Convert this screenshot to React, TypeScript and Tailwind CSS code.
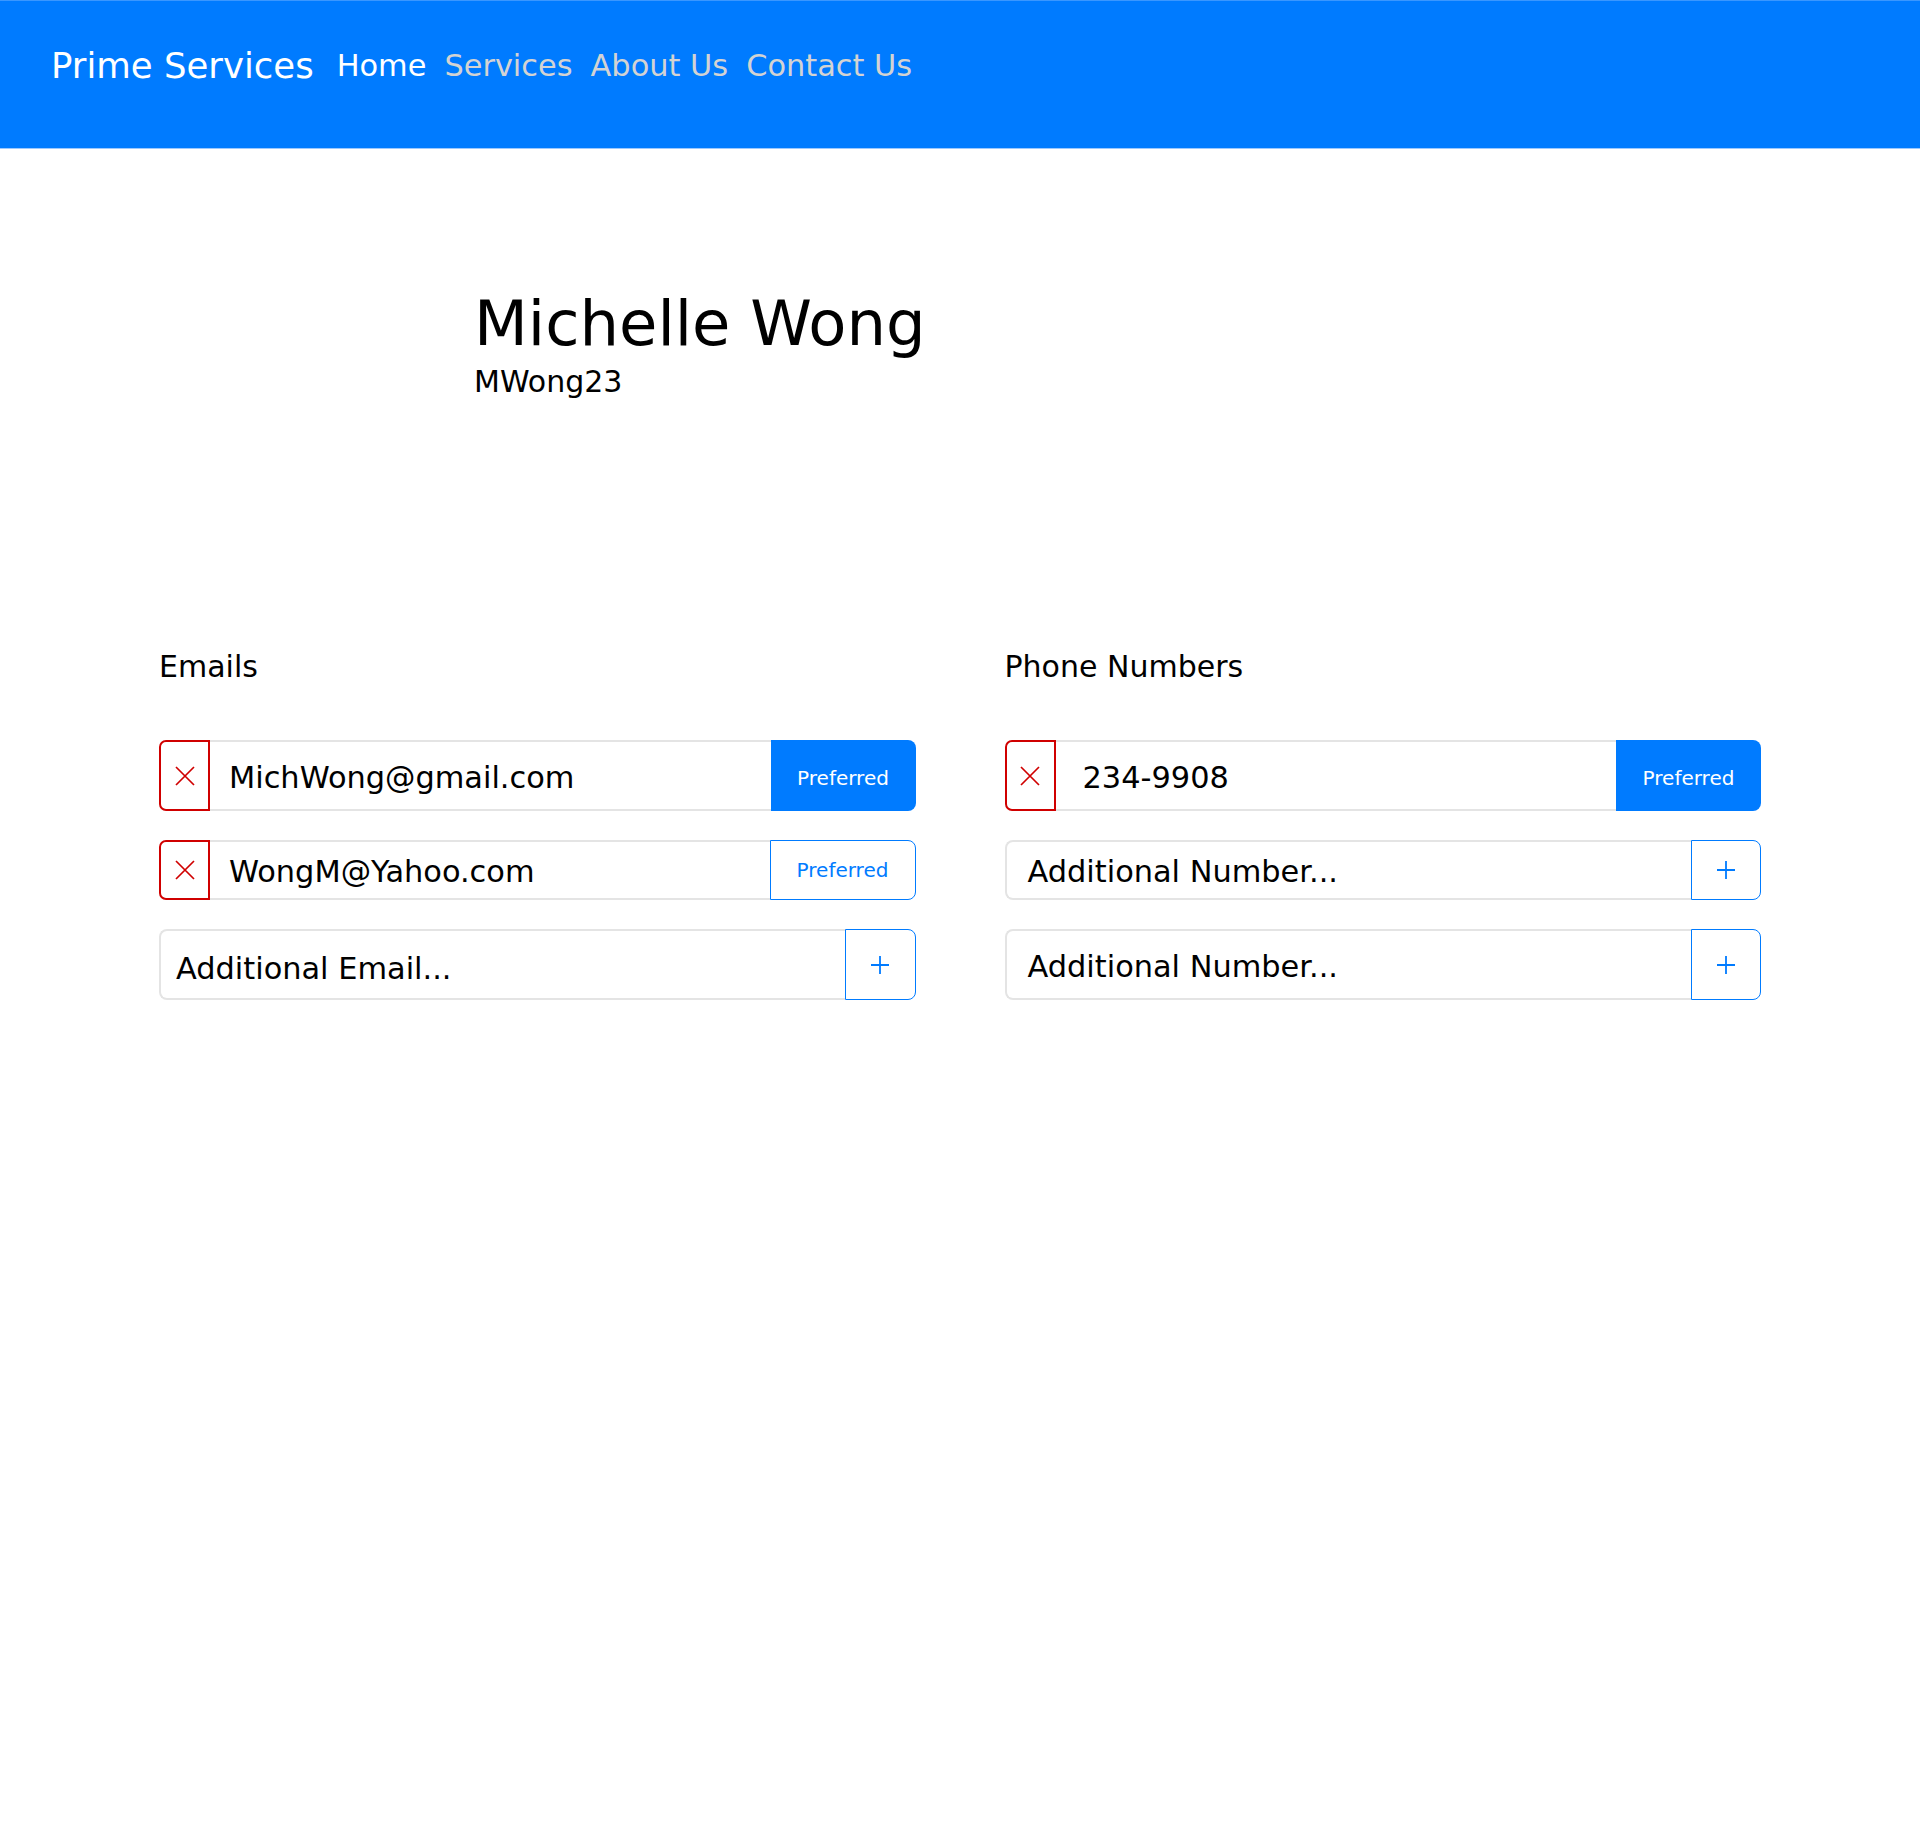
const navLinks = [
  { label: "Home", active: true },
  { label: "Services" },
  { label: "About Us" },
  { label: "Contact Us" },
];

function CrossIcon() {
  return (
    <svg width="22" height="22" viewBox="0 0 22 22" fill="none" stroke="#d00000" strokeWidth="1.7">
      <path d="M2 2 L20 20 M20 2 L2 20" />
    </svg>
  );
}

function PlusIcon() {
  return (
    <svg width="22" height="22" viewBox="0 0 22 22" fill="none" stroke="#007bff" strokeWidth="1.8">
      <path d="M11 2 V20 M2 11 H20" />
    </svg>
  );
}

function RemoveButton() {
  return (
    <button className="flex h-full w-[51px] shrink-0 items-center justify-center rounded-l-[7px] border-2 border-[#d00000] bg-white">
      <CrossIcon />
    </button>
  );
}

function PreferredButton({ solid }: { solid?: boolean }) {
  return (
    <button
      className={
        solid
          ? "flex h-full w-[145px] shrink-0 items-center justify-center rounded-r-[8px] bg-[#007bff] pt-[4px] text-[20px] text-white"
          : "flex h-full w-[146px] shrink-0 items-center justify-center rounded-r-[8px] border border-[#007bff] bg-white text-[20px] text-[#007bff]"
      }
    >
      Preferred
    </button>
  );
}

function AddButton({ wide }: { wide?: boolean }) {
  return (
    <button
      className={
        wide
          ? "flex h-full w-[71px] shrink-0 items-center justify-center rounded-r-[8px] border border-[#007bff] bg-white"
          : "flex h-full w-[70px] shrink-0 items-center justify-center rounded-r-[8px] border border-[#007bff] bg-white"
      }
    >
      <PlusIcon />
    </button>
  );
}

function ValueRow({ value, pad, solid, tall }: { value: string; pad: string; solid?: boolean; tall?: boolean }) {
  return (
    <div className={tall ? "flex h-[71px]" : "flex h-[60px]"}>
      <RemoveButton />
      <div className={`flex flex-1 items-center border-y-2 border-[#e4e4e4] pt-[4px] text-[30.4px] text-black ${pad}`}>{value}</div>
      <PreferredButton solid={solid} />
    </div>
  );
}

function AddRow({ placeholder, pad, wide, tall }: { placeholder: string; pad: string; wide?: boolean; tall?: boolean }) {
  return (
    <div className={tall ? "flex h-[71px]" : "flex h-[60px]"}>
      <div className={`flex flex-1 items-center rounded-l-[8px] border-2 border-r-0 border-[#e4e4e4] text-[30.4px] text-black ${pad}`}>
        {placeholder}
      </div>
      <AddButton wide={wide} />
    </div>
  );
}

export default function App() {
  return (
    <div className="min-h-[1840px] bg-white font-['DejaVu_Sans',sans-serif]">
      <header className="h-[149px] border-t border-b border-t-[#3a97ff] border-b-[#9cc9ff] bg-[#007bff]">
        <nav className="flex items-center pl-[51px] pt-[38px]">
          <span className="mr-[23px] text-[35.5px] leading-[54px] text-white">Prime Services</span>
          <div className="flex items-center gap-[18px]">
            {navLinks.map((link) => (
              <a
                key={link.label}
                href="#"
                className={link.active ? "text-[30.4px] leading-[44px] text-white" : "text-[30.4px] leading-[44px] text-[#d3d3d3]"}
              >
                {link.label}
              </a>
            ))}
          </div>
        </nav>
      </header>

      <section className="pl-[474px] pt-[138px]">
        <h1 className="text-[62.4px] leading-[73px] text-black">Michelle Wong</h1>
        <p className="text-[30px] leading-[44px] text-black">MWong23</p>
      </section>

      <main className="mx-auto mt-[241px] grid w-[1602px] grid-cols-2 gap-x-[89px]">
        <div>
          <h2 className="text-[30px] leading-[44px] text-black">Emails</h2>
          <div className="mt-[51px] flex flex-col gap-[29px]">
            <ValueRow value="MichWong@gmail.com" pad="pl-[19px]" solid tall />
            <ValueRow value="WongM@Yahoo.com" pad="pl-[19px]" />
            <AddRow placeholder="Additional Email..." pad="pl-[15px] pt-[8px]" wide tall />
          </div>
        </div>
        <div>
          <h2 className="text-[30px] leading-[44px] text-black">Phone Numbers</h2>
          <div className="mt-[51px] flex flex-col gap-[29px]">
            <ValueRow value="234-9908" pad="pl-[27px]" solid tall />
            <AddRow placeholder="Additional Number..." pad="pl-[21px] pt-[4px]" />
            <AddRow placeholder="Additional Number..." pad="pl-[21px] pt-[4px]" tall />
          </div>
        </div>
      </main>
    </div>
  );
}
